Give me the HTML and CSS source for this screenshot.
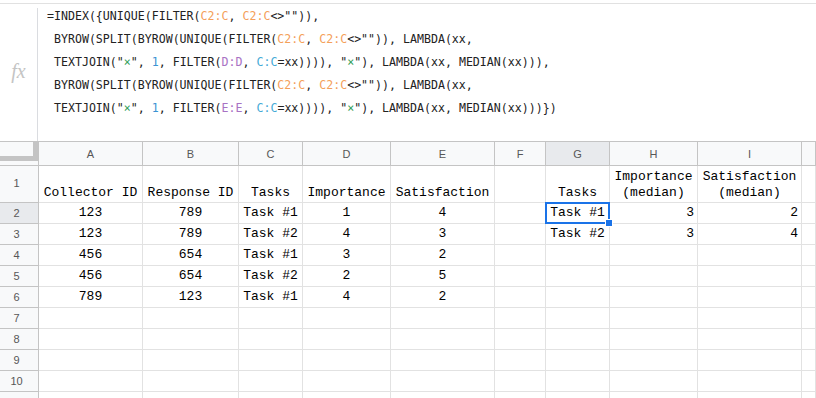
FILE: index.html
```html
<!DOCTYPE html>
<html lang="en">
<head>
<meta charset="UTF-8">
<title>Sheet</title>
<link rel="stylesheet" href="styles.css">
</head>
<body>
<div class="formula-bar">
    <div class="fx">fx</div>
    <div class="formula">
<div class="line">=INDEX({UNIQUE(FILTER(<span class="r1">C2:C</span>, <span class="r1">C2:C</span>&lt;&gt;"")),</div>
<div class="line"> BYROW(SPLIT(BYROW(UNIQUE(FILTER(<span class="r1">C2:C</span>, <span class="r1">C2:C</span>&lt;&gt;"")), LAMBDA(xx,</div>
<div class="line"> TEXTJOIN("<span class="str">×</span>", <span class="num">1</span>, FILTER(<span class="r2">D:D</span>, <span class="r3">C:C</span>=xx)))), "<span class="str">×</span>"), LAMBDA(xx, MEDIAN(xx))),</div>
<div class="line"> BYROW(SPLIT(BYROW(UNIQUE(FILTER(<span class="r1">C2:C</span>, <span class="r1">C2:C</span>&lt;&gt;"")), LAMBDA(xx,</div>
<div class="line"> TEXTJOIN("<span class="str">×</span>", <span class="num">1</span>, FILTER(<span class="r2">E:E</span>, <span class="r3">C:C</span>=xx)))), "<span class="str">×</span>"), LAMBDA(xx, MEDIAN(xx)))})</div>
    </div>
</div>

<div class="sheet">
    <!-- column headers -->
    <div class="corner"></div>
    <div class="col-head">A</div>
    <div class="col-head">B</div>
    <div class="col-head">C</div>
    <div class="col-head">D</div>
    <div class="col-head">E</div>
    <div class="col-head">F</div>
    <div class="col-head active">G</div>
    <div class="col-head">H</div>
    <div class="col-head">I</div>
    <div class="col-head"></div>

    <!-- row 1 -->
    <div class="row-head tall">1</div>
    <div class="cell tall">Collector ID</div>
    <div class="cell tall">Response ID</div>
    <div class="cell tall">Tasks</div>
    <div class="cell tall">Importance</div>
    <div class="cell tall">Satisfaction</div>
    <div class="cell tall"></div>
    <div class="cell tall">Tasks</div>
    <div class="cell tall">Importance<br>(median)</div>
    <div class="cell tall">Satisfaction<br>(median)</div>
    <div class="cell tall"></div>

    <!-- row 2 -->
    <div class="row-head active">2</div>
    <div class="cell">123</div>
    <div class="cell">789</div>
    <div class="cell">Task #1</div>
    <div class="cell">1</div>
    <div class="cell">4</div>
    <div class="cell"></div>
    <div class="cell selected">Task #1<span class="handle"></span></div>
    <div class="cell right">3</div>
    <div class="cell right">2</div>
    <div class="cell"></div>

    <!-- row 3 -->
    <div class="row-head">3</div>
    <div class="cell">123</div>
    <div class="cell">789</div>
    <div class="cell">Task #2</div>
    <div class="cell">4</div>
    <div class="cell">3</div>
    <div class="cell"></div>
    <div class="cell">Task #2</div>
    <div class="cell right">3</div>
    <div class="cell right">4</div>
    <div class="cell"></div>

    <!-- row 4 -->
    <div class="row-head">4</div>
    <div class="cell">456</div>
    <div class="cell">654</div>
    <div class="cell">Task #1</div>
    <div class="cell">3</div>
    <div class="cell">2</div>
    <div class="cell"></div>
    <div class="cell"></div>
    <div class="cell"></div>
    <div class="cell"></div>
    <div class="cell"></div>

    <!-- row 5 -->
    <div class="row-head">5</div>
    <div class="cell">456</div>
    <div class="cell">654</div>
    <div class="cell">Task #2</div>
    <div class="cell">2</div>
    <div class="cell">5</div>
    <div class="cell"></div>
    <div class="cell"></div>
    <div class="cell"></div>
    <div class="cell"></div>
    <div class="cell"></div>

    <!-- row 6 -->
    <div class="row-head">6</div>
    <div class="cell">789</div>
    <div class="cell">123</div>
    <div class="cell">Task #1</div>
    <div class="cell">4</div>
    <div class="cell">2</div>
    <div class="cell"></div>
    <div class="cell"></div>
    <div class="cell"></div>
    <div class="cell"></div>
    <div class="cell"></div>

    <div class="row-head">7</div>
    <div class="cell"></div><div class="cell"></div><div class="cell"></div><div class="cell"></div><div class="cell"></div>
    <div class="cell"></div><div class="cell"></div><div class="cell"></div><div class="cell"></div><div class="cell"></div>

    <div class="row-head">8</div>
    <div class="cell"></div><div class="cell"></div><div class="cell"></div><div class="cell"></div><div class="cell"></div>
    <div class="cell"></div><div class="cell"></div><div class="cell"></div><div class="cell"></div><div class="cell"></div>

    <div class="row-head">9</div>
    <div class="cell"></div><div class="cell"></div><div class="cell"></div><div class="cell"></div><div class="cell"></div>
    <div class="cell"></div><div class="cell"></div><div class="cell"></div><div class="cell"></div><div class="cell"></div>

    <div class="row-head">10</div>
    <div class="cell"></div><div class="cell"></div><div class="cell"></div><div class="cell"></div><div class="cell"></div>
    <div class="cell"></div><div class="cell"></div><div class="cell"></div><div class="cell"></div><div class="cell"></div>

    <div class="row-head">11</div>
    <div class="cell"></div><div class="cell"></div><div class="cell"></div><div class="cell"></div><div class="cell"></div>
    <div class="cell"></div><div class="cell"></div><div class="cell"></div><div class="cell"></div><div class="cell"></div>
</div>
</body>
</html>
```

FILE: styles.css
```css
body {
    margin: 0;
    padding: 0;
    background-color: #ffffff;
    font-family: Arial, "Liberation Sans", sans-serif;
    overflow: hidden;
    height: 398px;
}

/* formula bar */
.formula-bar {
    margin-top: 3px;
    border-top: 1px solid #e1e1e1;
    height: 137px;
    display: flex;
}

.fx {
    width: 38px;
    margin-top: 4px;
    border-right: 1px solid #dadce0;
    display: flex;
    align-items: center;
    justify-content: center;
    padding-bottom: 6px;
    font-family: "Liberation Serif", serif;
    font-style: italic;
    font-size: 20px;
    color: #c4c4c4;
    box-sizing: border-box;
}

.formula {
    padding: 1px 0 0 9px;
    font-family: "DejaVu Sans Mono", monospace;
    font-size: 11.6px;
    color: #222222;
}

.line {
    white-space: pre;
    line-height: 23px;
    height: 23px;
}

.r1 { color: #f4a05a; }
.r2 { color: #a872c4; }
.r3 { color: #45aad6; }
.str { color: #2f9e58; }
.num { color: #3b93d3; }

/* sheet grid */
.sheet {
    display: grid;
    grid-template-columns: 39px 104px 96px 64px 88px 104px 51px 64px 88px 104px 1fr;
    grid-auto-rows: 21px;
    grid-template-rows: 24px 37px;
    border-top: 1px solid #c4c4c4;
}

.corner {
    background-color: #f8f9fa;
    border-right: 1px solid #c4c4c4;
    border-bottom: 1px solid #c4c4c4;
    position: relative;
}

.corner::before {
    content: "";
    position: absolute;
    top: 0;
    right: 0;
    width: 5px;
    height: 19px;
    background-color: #c4c4c4;
}

.corner::after {
    content: "";
    position: absolute;
    top: 14px;
    left: 0;
    right: 0;
    height: 5px;
    background-color: #c4c4c4;
}

.col-head {
    background-color: #f8f9fa;
    border-right: 1px solid #c4c4c4;
    border-bottom: 1px solid #c4c4c4;
    font-size: 11px;
    color: #575757;
    display: flex;
    align-items: center;
    justify-content: center;
}

.row-head {
    background-color: #f8f9fa;
    border-right: 1px solid #c4c4c4;
    border-bottom: 1px solid #c4c4c4;
    font-size: 11px;
    color: #575757;
    display: flex;
    align-items: center;
    justify-content: center;
    padding-right: 5px;
}

.row-head.tall {
    padding-bottom: 3px;
}

.col-head.active,
.row-head.active {
    background-color: #e8eaed;
}

.cell {
    border-right: 1px solid #e2e2e2;
    border-bottom: 1px solid #e2e2e2;
    font-family: "Liberation Mono", "Courier New", monospace;
    font-size: 13px;
    color: #000000;
    line-height: 20px;
    text-align: center;
    white-space: nowrap;
    overflow: hidden;
    position: relative;
}

.cell.tall {
    line-height: 16px;
    display: flex;
    align-items: flex-end;
    justify-content: center;
    padding-bottom: 1px;
}

.cell.right {
    text-align: right;
    padding-right: 3px;
}

.cell.selected {
    overflow: visible;
}

.cell.selected::before {
    content: "";
    position: absolute;
    top: -1px;
    left: -1px;
    right: -1px;
    bottom: -1px;
    border: 2px solid #1a73e8;
}

.handle {
    position: absolute;
    right: -4px;
    bottom: -4px;
    width: 6px;
    height: 6px;
    background-color: #1a73e8;
    border: 1px solid #ffffff;
    z-index: 2;
}
```
